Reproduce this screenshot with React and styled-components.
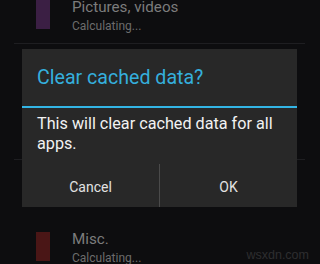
import React from 'react'
import styled, { createGlobalStyle } from 'styled-components'

const GlobalStyle = createGlobalStyle`
  html, body {
    margin: 0;
    padding: 0;
    background: #0d0d0f;
    overflow: hidden;
  }
  body {
    font-family: Roboto, "Noto Sans", "Liberation Sans", sans-serif;
  }
`

const Screen = styled.div`
  position: relative;
  width: 320px;
  height: 264px;
  overflow: hidden;
  background: #0d0d0f;
`

const List = styled.div`
  display: flex;
  flex-direction: column;
  margin-top: -72px;
`

const Item = styled.div`
  display: flex;
  align-items: flex-start;
  gap: 22px;
  height: 29px;
  padding: 72px 0 14px 36px;
`

const Swatch = styled.div`
  width: 14px;
  height: 29px;
  flex: none;
  background: ${p => p.color};
`

const Texts = styled.div`
  display: flex;
  flex-direction: column;
  margin-top: -2px;
`

const Title = styled.div`
  font-size: 15.2px;
  line-height: 18px;
  color: #7c7c7c;
`

const Sub = styled.div`
  margin-top: 3px;
  font-size: 12px;
  line-height: 14px;
  color: #6c6c6c;
`

const Divider = styled.div`
  height: 1px;
  margin: 0 15px 0 14px;
  background: #1e1e21;
`

const Dialog = styled.div`
  position: absolute;
  left: 22px;
  top: 49px;
  width: 275px;
  height: 158px;
  display: flex;
  flex-direction: column;
  background: #282828;
`

const DialogTitle = styled.div`
  height: 57px;
  display: flex;
  align-items: center;
  padding-left: 15px;
  font-size: 19.6px;
  color: #35afdd;
`

const Rule = styled.div`
  height: 2px;
  background: #33b5e5;
`

const Body = styled.div`
  padding: 6px 8px 0 15px;
  font-size: 16.2px;
  line-height: 20px;
  color: #f2f2f2;
`

const Buttons = styled.div`
  margin-top: auto;
  height: 43px;
  display: flex;
`

const Button = styled.div`
  flex: 1;
  display: flex;
  align-items: center;
  justify-content: center;
  padding-top: 2px;
  box-sizing: border-box;
  font-size: 14px;
  color: #e2e2e2;
  border-right: ${p => (p.$sep ? '1px solid #4a4a4a' : 'none')};
`

const Mark = styled.div`
  position: absolute;
  right: 11px;
  bottom: 2px;
  font-family: "Liberation Sans", Arial, sans-serif;
  font-size: 12.5px;
  color: #2e2e30;
`

const items = [
  { title: 'Pictures, videos', color: '#3b1f44' },
  { title: 'Apps', color: '#1f3a44' },
  { title: 'Misc.', color: '#4a1616' },
]

export default function App() {
  return (
    <Screen>
      <GlobalStyle />
      <List>
        {items.map((it, i) => (
          <React.Fragment key={it.title}>
            {i > 0 && <Divider />}
            <Item>
              <Swatch color={it.color} />
              <Texts>
                <Title>{it.title}</Title>
                <Sub>Calculating...</Sub>
              </Texts>
            </Item>
          </React.Fragment>
        ))}
      </List>
      <Dialog>
        <DialogTitle>Clear cached data?</DialogTitle>
        <Rule />
        <Body>This will clear cached data for all apps.</Body>
        <Buttons>
          <Button $sep>Cancel</Button>
          <Button>OK</Button>
        </Buttons>
      </Dialog>
      <Mark>wsxdn.com</Mark>
    </Screen>
  )
}
